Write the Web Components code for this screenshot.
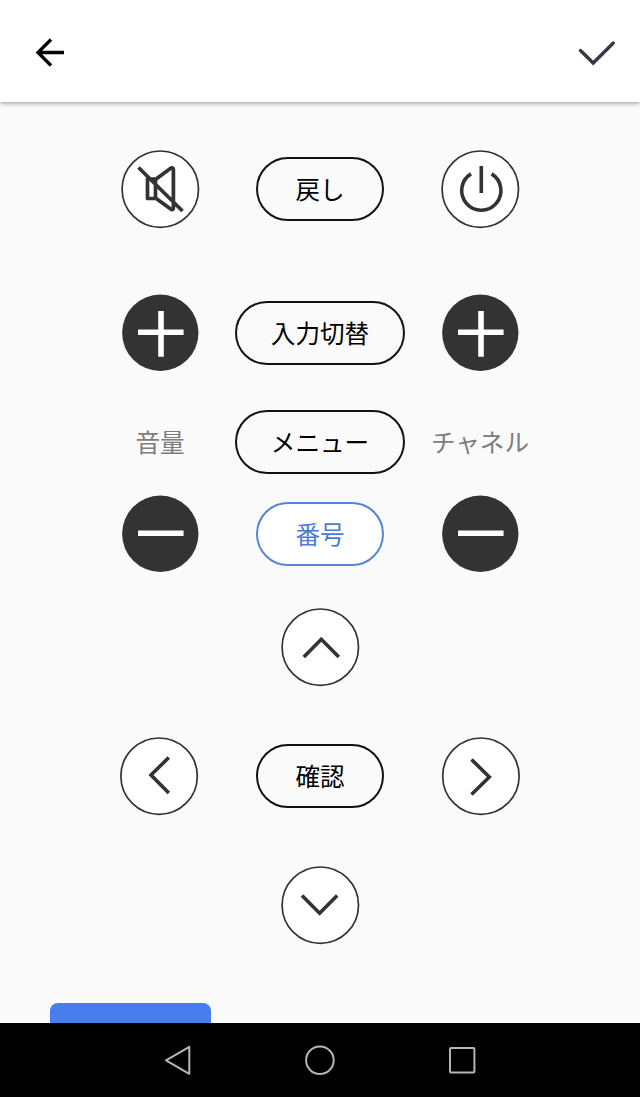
<!DOCTYPE html>
<html lang="ja">
<head>
<meta charset="utf-8">
<title>リモコン</title>
<style>
html,body{margin:0;height:100%}
body{font-family:"Noto Sans CJK JP",sans-serif;background:#fafafa;overflow:hidden}
</style>
</head>
<body>
<remote-app></remote-app>
<script>
const define = (name, html) => {
  const template = document.createElement('template');
  template.innerHTML = html;
  customElements.define(name, class extends HTMLElement {
    constructor() {
      super();
      this.attachShadow({mode: 'open'}).append(template.content.cloneNode(true));
    }
  });
};

define('app-bar', `
<style>
:host{display:flex;justify-content:space-between;align-items:center;height:102px;flex:none;background:#fff;box-shadow:0 1px 5px rgba(0,0,0,.42);z-index:1;box-sizing:border-box;padding:0 21px 0 30px}
svg{display:block;fill:none}
</style>
<svg width="40" height="40" viewBox="30 31 40 40" stroke="#000" stroke-width="3.3"><path d="M64 52.5H38M51 39.5L38 52.5L51 65.5"/></svg>
<svg width="48" height="40" viewBox="571 31 48 40" stroke="#363944" stroke-width="3.4" stroke-linecap="round"><path d="M580.5 50.5L593.2 63L613.3 43"/></svg>
`);

// Round key: the icon is drawn in an 80x80 box.
const icons = {
  mute: '<path stroke-width="3.7" stroke-linejoin="round" d="M27.5 30H35.5V49.5H27.5ZM35.8 30.2L50.7 19.2C52.2 18.4 53.4 19 53.4 20.5V59C53.4 60.5 52.2 61 50.7 60L35.8 49.2M18.5 18.5L62.5 62"/>',
  power: '<path stroke-width="3.6" d="M31 24.9A19.6 19.6 0 1 0 51.6 24.9M41.3 17V44"/>',
  plus: '<path stroke="#fff" stroke-width="5.6" d="M18 39.3H63.6M41 17.9V63.7"/>',
  minus: '<path stroke="#fff" stroke-width="5.4" d="M18 39.2H63.6"/>',
  up: '<path d="M23.8 50L41.3 32.3L58.8 50"/>',
  down: '<path d="M22 30.5L39.6 48.2L57.2 30.5"/>',
  left: '<path d="M48.8 21.5L31 39L48.8 57"/>',
  right: '<path d="M31.5 23.5L49.3 41L31.5 58.5"/>'
};
customElements.define('round-key', class extends HTMLElement {
  connectedCallback() {
    const kind = this.getAttribute('icon');
    const solid = kind === 'plus' || kind === 'minus';
    const cx = kind === 'left' ? 39.1 : kind === 'right' ? 40.9 : 40.3;
    this.attachShadow({mode: 'open'}).innerHTML = `
<style>:host{display:block;width:80px;height:80px}svg{display:block}</style>
<svg width="80" height="80" viewBox="0 0 80 80" fill="none" stroke="#333" stroke-width="3.6">
<circle cx="${cx}" cy="${solid ? 39.8 : 40.2}" r="38.2" fill="${solid ? '#333' : '#fff'}" stroke-width="${solid ? 0 : 1.7}"/>${icons[kind]}</svg>`;
  }
});

define('pill-key', `
<style>
:host{display:flex;align-items:center;justify-content:center;box-sizing:border-box;width:128px;height:64px;padding-bottom:2px;border:2px solid #111;border-radius:32px;color:#000;font-size:24.6px;line-height:36px;white-space:nowrap}
:host([wide]){width:170px}
:host([accent]){color:#4a7bd6;border-color:#5585d8;background:#fff}
</style><slot></slot>`);

define('key-label', `
<style>:host{display:block;color:#7d7d7d;font-size:24.6px;line-height:36px;white-space:nowrap}</style><slot></slot>`);

define('key-pad', `
<style>
:host{display:grid;justify-content:center;justify-items:center;align-items:end;grid-template-columns:140px 180px 140px;grid-template-rows:80px 144px 101px 100px 113px 129px 129px;padding-top:47px}
</style><slot></slot>`);

define('nav-bar', `
<style>
:host{display:flex;justify-content:center;align-items:center;gap:102px;height:74px;flex:none;background:#000;box-sizing:border-box}
svg{display:block;fill:none;stroke:#b5b5b5;stroke-width:2}
</style>
<svg width="40" height="40" viewBox="158 1040 40 40"><path stroke-linejoin="round" d="M166 1060.3L189.3 1046.8V1073.8Z"/></svg>
<svg width="40" height="40" viewBox="300 1040 40 40"><circle cx="319.9" cy="1060.3" r="13.8"/></svg>
<svg width="40" height="40" viewBox="442 1040 40 40"><rect x="450" y="1048" width="24.4" height="24.4" rx="1"/></svg>
`);

define('remote-app', `
<style>
:host{display:flex;flex-direction:column;height:100vh;background:#fafafa}
main{flex:1;min-height:0;overflow:hidden}
.mid{grid-column:2}
.first{grid-column:1}
.key{margin-bottom:8px}
.label{margin-bottom:15px}
.action{width:161px;height:64px;margin:58px 0 0 50px;border-radius:8px;background:#467eee}
</style>
<app-bar></app-bar>
<main>
<key-pad>
<round-key icon="mute"></round-key><pill-key class="key">戻し</pill-key><round-key icon="power"></round-key>
<round-key icon="plus"></round-key><pill-key class="key" wide>入力切替</pill-key><round-key icon="plus"></round-key>
<key-label class="label">音量</key-label><pill-key wide>メニュー</pill-key><key-label class="label">チャネル</key-label>
<round-key icon="minus"></round-key><pill-key class="key" accent>番号</pill-key><round-key icon="minus"></round-key>
<round-key class="mid" icon="up"></round-key>
<round-key class="first" icon="left"></round-key><pill-key class="key">確認</pill-key><round-key icon="right"></round-key>
<round-key class="mid" icon="down"></round-key>
</key-pad>
<div class="action"></div>
</main>
<nav-bar></nav-bar>
`);
</script>
</body>
</html>
